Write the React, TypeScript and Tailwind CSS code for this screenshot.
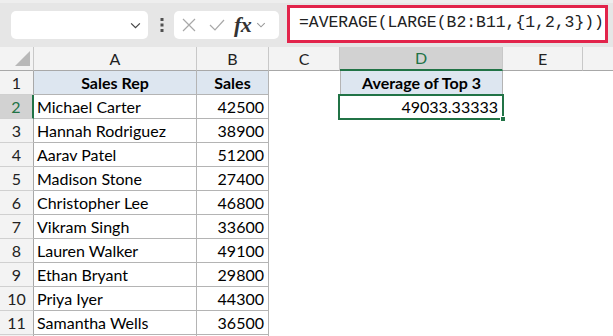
import React from 'react';

const rows: [string, number][] = [
  ['Michael Carter', 42500],
  ['Hannah Rodriguez', 38900],
  ['Aarav Patel', 51200],
  ['Madison Stone', 27400],
  ['Christopher Lee', 46800],
  ['Vikram Singh', 33600],
  ['Lauren Walker', 49100],
  ['Ethan Bryant', 29800],
  ['Priya Iyer', 44300],
  ['Samantha Wells', 36500],
];

const cols = ['A', 'B', 'C', 'D', 'E'];

const Chevron: React.FC<{ className?: string }> = ({ className }) => (
  <svg viewBox="0 0 12 8" className={className} fill="none" stroke="currentColor" strokeWidth="1.4">
    <path d="M1 1.5 L6 6.5 L11 1.5" />
  </svg>
);

const App: React.FC = () => {
  return (
    <div className="w-[613px] h-[336px] overflow-hidden bg-white font-['Lato',sans-serif] text-[16px] text-black">
      {/* Formula toolbar */}
      <div className="h-[47px] bg-[#e6e6e6] border-t-[3px] border-[#eeeeee] flex items-center">
        <div className="ml-[11px] w-[137px] h-[28px] bg-white rounded-[5px] flex items-center justify-end pr-[7px] text-[#444]">
          <Chevron className="w-[11px] h-[7px]" />
        </div>
        <svg viewBox="0 0 4 14" className="ml-[12px] w-[4px] h-[14px] shrink-0" fill="#505050">
          <rect x="0.5" y="0" width="3" height="3" />
          <rect x="0.5" y="5.5" width="3" height="3" />
          <rect x="0.5" y="11" width="3" height="3" />
        </svg>
        <div className="ml-[10px] w-[105px] h-[28px] bg-white rounded-[5px] flex items-center text-[#a8a8a8]">
          <svg viewBox="0 0 14 14" className="ml-[8px] w-[14px] h-[14px]" fill="none" stroke="currentColor" strokeWidth="1.2">
            <path d="M1 1 L13 13 M13 1 L1 13" />
          </svg>
          <svg viewBox="0 0 16 14" className="ml-[13px] w-[16px] h-[14px]" fill="none" stroke="currentColor" strokeWidth="1.2">
            <path d="M1 7 L6 12 L15 2" />
          </svg>
          <span className="ml-[9px] font-['Liberation_Serif',serif] italic font-bold text-[22px] leading-none text-[#333] tracking-[-0.5px]">fx</span>
          <Chevron className="ml-[5px] w-[10px] h-[6px] text-[#999]" />
        </div>
        <div className="ml-[8px] w-[321px] h-[38px] -mt-[3px] bg-white border-[3px] border-[#e2244b] flex items-center overflow-hidden pl-[9px]">
          <span className="font-['Liberation_Mono',monospace] text-[16.4px] text-[#222] whitespace-nowrap">
            =AVERAGE(LARGE(B2:B11,&#123;1,2,3&#125;))
          </span>
        </div>
      </div>

      {/* Sheet */}
      <div className="grid grid-cols-[34px_163px_72px_71px_163px_80px_1fr] auto-rows-[24px]">
        {/* column headers */}
        <div className="relative bg-[#f3f3f3] border-r border-b border-[#c8c8c8] border-b-[#a8a8a8]">
          <div className="absolute right-[3px] bottom-[4px] w-0 h-0 border-l-[15px] border-l-transparent border-b-[15px] border-b-[#b8b8b8]" />
        </div>
        {cols.map((c) =>
          c === 'D' ? (
            <div
              key={c}
              className="bg-[#d2d2d2] border-r border-[#c8c8c8] border-b-2 border-b-[#217346] flex items-center justify-center text-[#217346]"
            >
              {c}
            </div>
          ) : (
            <div
              key={c}
              className="bg-[#f3f3f3] border-r border-[#c8c8c8] border-b border-b-[#a8a8a8] flex items-center justify-center text-[#222]"
            >
              {c}
            </div>
          )
        )}
        <div className="bg-[#f3f3f3] border-b border-[#a8a8a8]" />

        {/* row 1 */}
        <div className="bg-[#f3f3f3] border-r border-[#a8a8a8] border-b border-b-[#d0d0d0] flex items-center justify-center text-[#222]">
          1
        </div>
        <div className="bg-[#dde6f0] border-r border-b border-[#b4b4b4] flex items-center justify-center font-bold">
          Sales Rep
        </div>
        <div className="bg-[#dde6f0] border-r border-b border-[#b4b4b4] flex items-center justify-center font-bold">
          Sales
        </div>
        <div />
        <div className="bg-[#dde6f0] border-l border-r border-b border-[#b4b4b4] flex items-center justify-center font-bold">
          Average of Top 3
        </div>
        <div />
        <div />

        {rows.map(([name, sales], i) => {
          const n = i + 2;
          return (
            <React.Fragment key={name}>
              {n === 2 ? (
                <div className="bg-[#d2d2d2] border-r-2 border-[#217346] border-b border-b-[#d0d0d0] flex items-center justify-center text-[#217346]">
                  {n}
                </div>
              ) : (
                <div className="bg-[#f3f3f3] border-r border-[#a8a8a8] border-b border-b-[#d0d0d0] flex items-center justify-center text-[#222]">
                  {n}
                </div>
              )}
              <div className="border-r border-b border-[#b4b4b4] flex items-center pl-[3px] whitespace-nowrap">
                {name}
              </div>
              <div className="border-r border-b border-[#b4b4b4] flex items-center justify-end pr-[4px]">
                {sales}
              </div>
              <div />
              {n === 2 ? (
                <div className="relative flex items-center justify-end pr-[5px]">
                  49033.33333
                  <div className="absolute -left-[2px] -top-[1px] -right-[1px] -bottom-[1px] border-2 border-[#217346]" />
                  <div className="absolute -right-[3px] -bottom-[3px] w-[6px] h-[6px] bg-[#217346] border border-white" />
                </div>
              ) : (
                <div />
              )}
              <div />
              <div />
            </React.Fragment>
          );
        })}
        <div className="bg-[#f3f3f3] border-r border-[#a8a8a8]" />
        <div className="border-r border-[#b4b4b4]" />
        <div className="border-r border-[#b4b4b4]" />
      </div>
    </div>
  );
};

export default App;
